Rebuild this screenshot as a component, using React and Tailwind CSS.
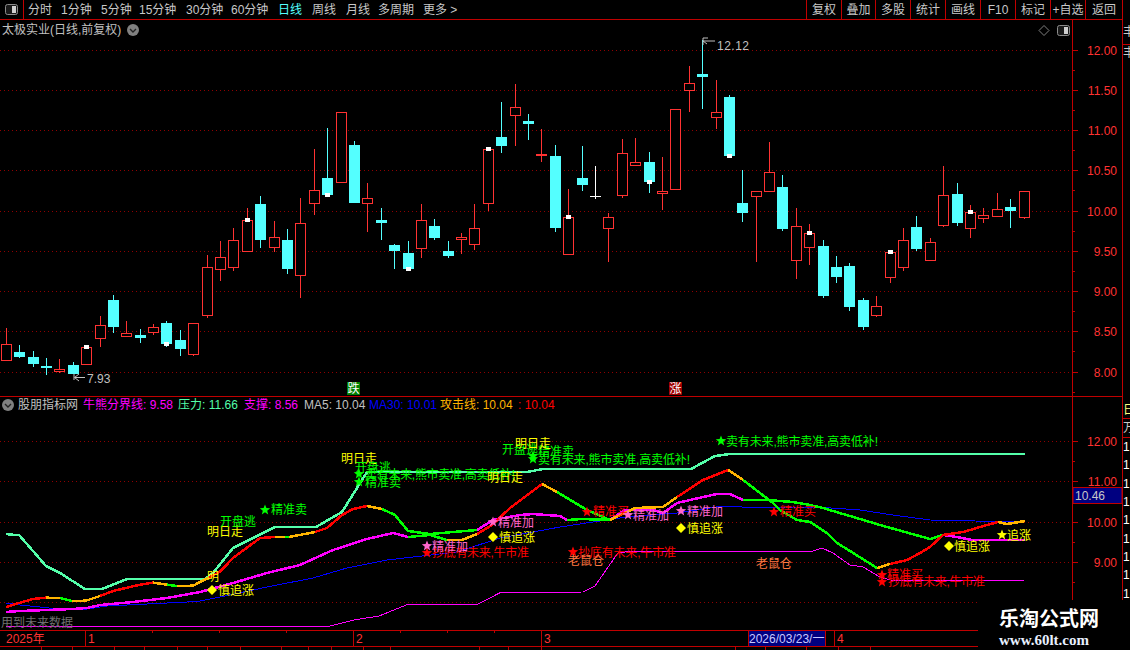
import React from 'react';

const RED = '#ff3232', CY = '#54ffff', GREEN = '#00ff00', OR = '#ffb400', TEAL = '#54ffaa', MG = '#ff00ff', YE = '#ffff00', PK = '#ff66cc', LR = '#ff0000', RAT = '#ff7840', DOT = '#900000';

// kind: r red hollow, c cyan, w white ; high, top, bottom, low, marker
const C = [
  ['r',328,344,361,361],['c',345,352,357,358],['c',351,357,364,367],['c',358,366,368,375],['r',359,369,372,373],
  ['c',362,365,374,374],['r',347,347,365,365,'t'],['r',316,325,339,347],['c',295,300,327,333],['r',321,333,337,337],
  ['c',329,335,338,343],['r',324,327,333,335],['c',321,323,344,347,'b'],['c',330,340,349,356],['r',323,323,355,356],
  ['r',255,267,316,318],['r',241,257,270,281],['r',228,240,268,271],['r',208,220,252,252,'t'],['c',196,204,240,248],
  ['r',221,237,248,252],['c',229,240,269,274],['r',198,223,276,298],['r',149,190,204,215],['c',128,178,195,195,'b'],
  ['r',112,112,183,183],['c',141,145,203,203],['r',183,198,204,232],['c',208,220,223,240],['c',244,245,251,269],
  ['c',241,253,269,269,'b'],['r',204,220,249,258],['c',219,226,238,240],['c',241,251,256,258],['r',233,237,240,254],
  ['r',204,228,245,250],['r',149,149,204,211,'t'],['c',102,137,146,153],['r',84,107,116,146],['c',114,121,124,140],
  ['r',129,154,156,162],['c',145,156,228,232],['r',189,217,255,255,'t'],['c',146,178,185,191],['w',166,196,197,199],
  ['r',213,217,229,262],['r',139,153,196,198],['r',138,162,166,166],['c',152,162,182,193,'b'],['r',157,191,194,210],
  ['r',109,109,190,190],['r',66,83,91,112],['c',40,74,77,109],['r',80,112,118,129],['c',95,97,156,156,'b'],
  ['c',170,203,213,222],['r',191,191,197,262],['r',142,172,192,192],['c',175,187,229,231],['r',208,226,261,279],
  ['r',224,233,248,265,'t'],['c',240,246,296,298],['c',256,267,277,283],['c',263,266,307,311],['c',298,300,327,330],
  ['r',296,306,316,317],['r',252,252,278,283,'t'],['r',228,240,268,271],['c',216,227,249,251],['r',238,242,261,261],
  ['r',166,195,226,227],['c',183,194,223,226],['r',205,212,229,238,'t'],['r',208,215,219,223],['r',193,209,217,217],
  ['c',199,207,211,228],['r',191,191,218,219],
];

function Candle({ d, i }) {
  const [k, h, t, b, l, m] = d;
  const x = Math.floor(6.3 + 13.391 * i);
  const col = k === 'r' ? RED : k === 'c' ? CY : '#ffffff';
  return (
    <g shapeRendering="crispEdges">
      <rect x={x} y={h} width={1} height={Math.max(l - h, 1)} fill={col} />
      {k === 'r' ? (
        <rect x={x - 4.5} y={t + 0.5} width={10} height={Math.max(b - t - 1, 1)} fill="#000" stroke={col} strokeWidth={1} />
      ) : (
        <rect x={x - 5} y={t} width={11} height={Math.max(b - t, 1)} fill={col} />
      )}
      {m && <rect x={x - 2} y={(m === 't' ? t : b) - 2} width={5} height={4} fill="#fff" />}
    </g>
  );
}

const L = (c, w, pts) => ({ c, w, pts });
const LINES = [
  L('#0000ff', 1, '6,603 20,605 40,607 57,609 87,609 107,606 147,604 187,602 200,601 220,597 267,587 313,578 347,568 387,560 457,552 500,538 560,527 593,522 627,517 677,513 723,506 760,508 817,507 860,510 893,515 930,520 975,521 1023,522'),
  L(MG, 1, '6,626 330,626 354,620 379,616 407,604.7 477,604.7 500,592.7 583,592 595,586 618,552.7 635,551 813,551 822,548 833,553 850,565 863,567 880,577 890,580 930,581 1024,580.5'),
  L(MG, 2.5, '6,612 20,611 73,609 87,608 100,605 133,602 167,598 200,592 233,583 267,573 300,565 333,550 367,539 393,533 408,537'),
  L(MG, 2.5, '477,530 493,520 520,515 533,514 560,516 567,520'),
  L(MG, 2.5, '610,520 625,510 635,510 653,510 663,513 677,503 703,497 717,494 730,494 743,500'),
  L(MG, 2.5, '943,535 957,537 972,540 1025,540'),
  L(GREEN, 2.5, '567,520 582,519 610,520'),
  L(GREEN, 2.5, '743,500 767,500 793,502 810,505 823,508 880,525 930,539 943,535'),
  L(GREEN, 2.5, '408,537 430,535 447,540'),
  L(TEAL, 2.5, '6,534 12,534.7 19,535 33,551 46,566 60,573 85,589 102,589 127,579 205,579 213,573 233,548 253,538 275,527 316,527 342,512 367,472 387,472 487,472 527,472 543,469 691,469 715,456 730,454 1025,454'),
  L(LR, 2.5, '6,607 20,602.7 33,599 46,597.7'),
  L(OR, 2.5, '46,597.7 60,598'),
  L(GREEN, 2.5, '60,598 72,601'),
  L(OR, 2.5, '72,601 86,600.7 100,596'),
  L(LR, 2.5, '100,596 113,591 140,584.7 153,582.7'),
  L(OR, 2.5, '153,582.7 167,584.7'),
  L(GREEN, 2.5, '167,584.7 177,586'),
  L(OR, 2.5, '177,586 193,585.7 208,578'),
  L(LR, 2.5, '208,578 220,571.7 233,558 260,538 275,537'),
  L(OR, 2.5, '275,537 285,537'),
  L(GREEN, 2.5, '285,537 289,537'),
  L(OR, 2.5, '289,537 315,532'),
  L(LR, 2.5, '315,532 327,528 342,515 353,509 367,506'),
  L(OR, 2.5, '367,506 382,509'),
  L(GREEN, 2.5, '382,509 395,515 408,531 430,534 477,530'),
  L(OR, 2.5, '447,540 462,540 477,534'),
  L(LR, 2.5, '477,534 492,525 510,508 542,484'),
  L(OR, 2.5, '542,484 557,492'),
  L(GREEN, 2.5, '557,492 587,510 610,520'),
  L(OR, 2.5, '610,520 635,508 663,507 677,497'),
  L(LR, 2.5, '677,497 703,480 728,470'),
  L(OR, 2.5, '728,470 743,480'),
  L(GREEN, 2.5, '743,480 773,503 780,510 797,520 810,522 827,533 837,543 850,551 877,568'),
  L(OR, 2.5, '877,568 890,564'),
  L(LR, 2.5, '890,564 907,560 920,553 930,547 943,535 963,532 987,525 998,522'),
  L(OR, 2.5, '998,522 1007,524 1025,521'),
];

const starPts = (x, y, r = 5.5) => {
  const p = [];
  for (let i = 0; i < 10; i++) {
    const a = -Math.PI / 2 + (i * Math.PI) / 5;
    const rr = i % 2 ? r * 0.42 : r;
    p.push(`${(x + rr * Math.cos(a)).toFixed(1)},${(y + rr * Math.sin(a)).toFixed(1)}`);
  }
  return p.join(' ');
};

const LONG = '卖有未来,熊市卖准,高卖低补!';
const DI = '抄底有未来,牛市准';
// [mark, mx, my, text, tx, baseline, colour, textLength]
const LABELS = [
  ['', 0, 0, '明日走', 207, 537, YE],
  ['', 0, 0, '开盘逃', 220, 527, GREEN],
  ['s', 265, 510, '精准卖', 271, 515, GREEN],
  ['', 0, 0, '明日走', 341, 464, YE],
  ['', 0, 0, '开盘逃', 355, 473, GREEN],
  ['s', 359, 474, LONG, 365, 480, GREEN, 150],
  ['s', 359, 482, '精准卖', 365, 488, GREEN],
  ['', 0, 0, '开盘逃', 502, 455, GREEN],
  ['s', 533, 456, '精准卖', 538, 457, GREEN],
  ['s', 533, 459, LONG, 538, 465, GREEN, 152],
  ['', 0, 0, '明日走', 515, 449, YE],
  ['', 0, 0, '明日走', 487, 483, YE],
  ['', 0, 0, '明', 207, 582, YE],
  ['d', 212, 590, '慎追涨', 218, 596, YE],
  ['s', 427, 553, DI, 432, 558, LR, 97],
  ['s', 427, 546, '精准加', 432, 552, PK],
  ['s', 493, 522, '精准加', 498, 528, PK],
  ['d', 493, 537, '慎追涨', 499, 543, YE],
  ['s', 721, 441, LONG, 726, 447, GREEN, 152],
  ['s', 587, 512, '精准买', 593, 517, LR],
  ['s', 628, 515, '精准加', 633, 521, PK],
  ['s', 681, 511, '精准加', 687, 517, PK],
  ['d', 681, 528, '慎追涨', 687, 534, YE],
  ['s', 774, 512, '精准买', 780, 517, LR],
  ['s', 573, 552, DI, 578, 558, LR, 98],
  ['', 0, 0, '老鼠仓', 568, 566, RAT],
  ['', 0, 0, '老鼠仓', 756, 569, RAT],
  ['s', 882, 575, '精准买', 887, 580, LR],
  ['s', 882, 582, DI, 888, 587, LR, 97],
  ['d', 949, 546, '慎追涨', 954, 552, YE],
  ['s', 1002, 535, '追涨', 1007, 541, YE],
];

function Badge({ className }) {
  return (
    <svg width="12" height="12" viewBox="0 0 12 12" className={className}>
      <circle cx="6" cy="6" r="6" fill="#808080" />
      <path d="M3 5 L6 8 L9 5" fill="none" stroke="#222" strokeWidth="1.4" />
    </svg>
  );
}

function Panel({ className }) {
  return (
    <svg width="13" height="11" viewBox="0 0 13 11" className={className}>
      <rect x="0.5" y="0.5" width="12" height="10" rx="2" fill="#1a1a1a" stroke="#8c8c8c" />
      <rect x="7" y="2" width="4" height="7" fill="#d0d0d0" />
    </svg>
  );
}

const TABS = [
  ['分时', 'w-[33px]'], ['1分钟', 'w-[40px]'], ['5分钟', 'w-[38px]'], ['15分钟', 'w-[47px]'], ['30分钟', 'w-[45px]'], ['60分钟', 'w-[47px]'],
  ['日线', 'w-[34px] text-[#54ffff]'], ['周线', 'w-[34px]'], ['月线', 'w-[32px]'], ['多周期', 'w-[45px]'], ['更多 >', 'w-[40px]'],
];
const BTNS = [['复权', 'w-[35px]'], ['叠加', 'w-[34px]'], ['多股', 'w-[35px]'], ['统计', 'w-[35px]'], ['画线', 'w-[35px]'], ['F10', 'w-[35px]'], ['标记', 'w-[35px]'], ['+自选', 'w-[35px]'], ['返回', 'w-[37px]']];

const UP = [[50.5, '12.00'], [90.5, '11.50'], [130.5, '11.00'], [170.5, '10.50'], [211.5, '10.00'], [251.5, '9.50'], [291.5, '9.00'], [331.5, '8.50'], [372.5, '8.00']];
const LOW = [[441.5, '12.00'], [481.5, '11.00'], [522.5, '10.00'], [562.5, '9.00']];

const STATUS = ['w-[42px]', 'w-[31px]', 'w-[42px]', 'w-[30px]', 'w-[33px]', 'w-[30px]', 'w-[33px]', 'w-[41px]', 'w-[27px]', 'w-[23px]', 'w-[32px]', 'w-[27px]', 'w-[89px]', 'w-[29px]', 'w-[33px]', 'w-[194px]', 'w-[30px]', 'w-[41px]', 'w-[32px]', 'w-[32px]'];

export default function App() {
  return (
    <div className="relative flex h-[650px] w-[1130px] flex-col overflow-hidden bg-black text-[12px] leading-none text-[#c8c8c8] [font-family:'Liberation_Sans','Noto_Sans_CJK_SC',sans-serif]">
      {/* toolbar */}
      <div className="flex h-[20px] w-[1123px] shrink-0 items-center border-b border-[#c00000]">
        <div className="flex h-full w-[24px] shrink-0 items-center justify-center border-r border-[#c00000]">
          <Panel />
        </div>
        <div className="ml-[4px] flex flex-1 items-center">
          {TABS.map(([t, c]) => (
            <span key={t} className={`whitespace-nowrap ${c}`}>{t}</span>
          ))}
        </div>
        {BTNS.map(([t, c]) => (
          <div key={t} className={`flex h-full items-center justify-center whitespace-nowrap border-l border-[#c00000] ${c}`}>{t}</div>
        ))}
        <div className="h-full w-px bg-[#c00000]" />
      </div>

      <div className="flex min-h-0 flex-1">
        <div className="flex w-[1123px] shrink-0 flex-col">
          {/* upper chart */}
          <div className="flex h-[377px] shrink-0 border-b border-[#c00000]">
            <div className="relative w-[1072px] shrink-0">
              <svg width="1072" height="376" viewBox="0 20 1072 376" className="block">
                {UP.map(([y]) => (
                  <line key={y} x1="0" x2="1072" y1={y} y2={y} stroke={DOT} strokeDasharray="1 3" shapeRendering="crispEdges" />
                ))}
                {C.map((d, i) => <Candle key={i} d={d} i={i} />)}
                <path d="M85 377.5 H75 M79 374 L74.5 377.5 L79 381 M74 374 V380" stroke="#c0c0c0" fill="none" />
                <text x="87" y="383" fill="#c0c0c0" fontSize="12">7.93</text>
                <path d="M703 41 H715 M703 41 L707 44 M703 38 V45 M703 38 H708" stroke="#c0c0c0" fill="none" />
                <text x="717" y="50" fill="#c0c0c0" fontSize="12" letterSpacing="0.5">12.12</text>
                <rect x="347" y="382" width="13" height="13" fill="#008000" />
                <text x="347.5" y="393" fill="#fff" fontSize="12">跌</text>
                <rect x="669" y="382" width="13" height="13" fill="#a00000" />
                <text x="669.5" y="393" fill="#fff" fontSize="12">涨</text>
                <path d="M1044 25.5 L1049 30.5 L1044 35.5 L1039 30.5 Z" fill="none" stroke="#808080" />
              </svg>
              <div className="absolute left-[2px] top-[4px] flex items-center gap-[6px] whitespace-nowrap">
                <span className="text-[12px] text-[#c0c0c0]">太极实业(日线,前复权)</span>
                <Badge />
              </div>
              <Panel className="absolute left-[1057px] top-[5px]" />
            </div>
            <div className="w-[51px] shrink-0 border-x border-[#c00000]">
              <svg width="49" height="376" viewBox="1073 20 49 376" className="block">
                {UP.map(([y, t]) => (
                  <g key={t}>
                    <line x1="1073" x2="1078" y1={y} y2={y} stroke="#c00000" />
                    <line x1="1073" x2="1075" y1={y + 20} y2={y + 20} stroke="#c00000" />
                    <text x="1117" y={y + 4.5} textAnchor="end" fill={RED} fontSize="12">{t}</text>
                  </g>
                ))}
              </svg>
            </div>
          </div>

          {/* lower chart */}
          <div className="flex h-[233px] shrink-0">
            <div className="relative w-[1072px] shrink-0">
              <svg width="1072" height="233" viewBox="0 397 1072 233" className="block">
                {[441.5, 481.5, 522.5, 562.5, 602.5].map((y) => (
                  <line key={y} x1="0" x2="1072" y1={y} y2={y} stroke={DOT} strokeDasharray="1 3" shapeRendering="crispEdges" />
                ))}
                {LINES.map((l, i) => (
                  <polyline key={i} points={l.pts} fill="none" stroke={l.c} strokeWidth={l.w} shapeRendering="crispEdges" />
                ))}
                {LABELS.map(([m, mx, my, t, tx, by, c, len], i) => (
                  <g key={i}>
                    {m === 's' && <polygon points={starPts(mx, my)} fill={c} />}
                    {m === 'd' && <path d={`M${mx} ${my - 5} L${mx + 5} ${my} L${mx} ${my + 5} L${mx - 5} ${my} Z`} fill={YE} />}
                    <text x={tx} y={by - 1} fill={c} fontSize="12" {...(len ? { textLength: len, lengthAdjust: 'spacing' } : {})}>{t}</text>
                  </g>
                ))}
                <text x="1" y="627" fill="#707070" fontSize="12">用到未来数据</text>
              </svg>
              <div className="absolute left-[2px] top-[2px] flex items-center whitespace-nowrap">
                <Badge />
                <span className="ml-[4px] w-[65px] text-[#c0c0c0]">股朋指标网</span>
                <span className="w-[95px] text-[#ff00ff]">牛熊分界线: 9.58</span>
                <span className="w-[66px] text-[#54ffaa]">压力: 11.66</span>
                <span className="w-[60px] text-[#ff00ff]">支撑: 8.56</span>
                <span className="w-[65px] text-[#c0c0c0]">MA5: 10.04</span>
                <span className="w-[71px] text-[#0000ff]">MA30: 10.01</span>
                <span className="w-[78px] text-[#ffb400]">攻击线: 10.04</span>
                <span className="text-[#ff0000]">: 10.04</span>
              </div>
            </div>
            <div className="w-[51px] shrink-0 border-x border-[#c00000]">
              <svg width="49" height="233" viewBox="1073 397 49 233" className="block">
                {LOW.map(([y, t]) => (
                  <g key={t}>
                    <line x1="1073" x2="1078" y1={y} y2={y} stroke="#c00000" />
                    <line x1="1073" x2="1075" y1={y + 20} y2={y + 20} stroke="#c00000" />
                    <text x="1117" y={y + 4.5} textAnchor="end" fill={RED} fontSize="12">{t}</text>
                  </g>
                ))}
                <rect x="1073" y="487.5" width="49" height="16" fill="#000080" stroke="#c00000" />
                <text x="1075" y="499.5" fill="#c8c8c8" fontSize="12">10.46</text>
              </svg>
            </div>
          </div>

          {/* time axis */}
          <div className="relative flex h-[17px] shrink-0 items-center border-y border-[#c00000] text-[#ff3232]">
            <div className="flex h-full w-[86px] items-center border-r border-[#c00000] pl-[6px]">2025年</div>
            <div className="flex h-full w-[268px] items-center border-r border-[#c00000] pl-[2px]">1</div>
            <div className="flex h-full w-[188px] items-center border-r border-[#c00000] pl-[2px]">2</div>
            <div className="flex h-full w-[207px] items-center border-r border-[#c00000] pl-[2px]">3</div>
            <div className="flex h-full w-[77px] items-center whitespace-nowrap border-r border-[#c00000] bg-[#000080] text-[#c8c8ff]">2026/03/23/一</div>
            <div className="h-full w-[9px] border-r border-[#c00000]" />
            <div className="flex h-full items-center pl-[2px]">4</div>
            {['left-[152px]', 'left-[219px]', 'left-[286px]', 'left-[400px]', 'left-[447px]', 'left-[494px]'].map((c) => (
              <span key={c} className={`absolute top-0 h-[2px] w-px bg-[#c00000] ${c}`} />
            ))}
          </div>

          {/* status bar */}
          <div className="flex h-[3px] shrink-0">
            {STATUS.map((c, i) => (
              <div key={i} className={`h-full border-r border-[#c00000] ${c}`} />
            ))}
          </div>
        </div>

        {/* clipped strip */}
        <div className="flex-1 overflow-hidden">
          <div className="flex h-[25px] items-center border-b border-[#c00000] text-[#c8c8c8]">丰</div>
          <div className="flex h-[16px] items-center text-[#c8c8c8]">丰</div>
          <div className="h-[341px]" />
          <div className="flex h-[17px] items-center border-b border-[#c00000] text-[#ffff80]">日</div>
          <div className="flex h-[19px] items-center border-b border-[#c00000] text-[#c8c8c8]">万</div>
          {[0, 1, 2, 3, 4, 5, 6, 7, 8].map((i) => (
            <div key={i} className="flex h-[18.3px] items-center text-[#ffffff]">1</div>
          ))}
        </div>
      </div>

      {/* watermark */}
      <div className="absolute bottom-0 right-0 flex h-[50px] w-[152px] flex-col items-start bg-black pl-[21px] pt-[9px] text-white">
        <span className="text-[20px] font-bold leading-[20px] whitespace-nowrap">乐淘公式网</span>
        <span className="mt-[4px] whitespace-nowrap text-[15px] font-bold leading-[15px] text-[#e8f0ff] [font-family:'Liberation_Serif',serif]">www.60lt.com</span>
      </div>
    </div>
  );
}
